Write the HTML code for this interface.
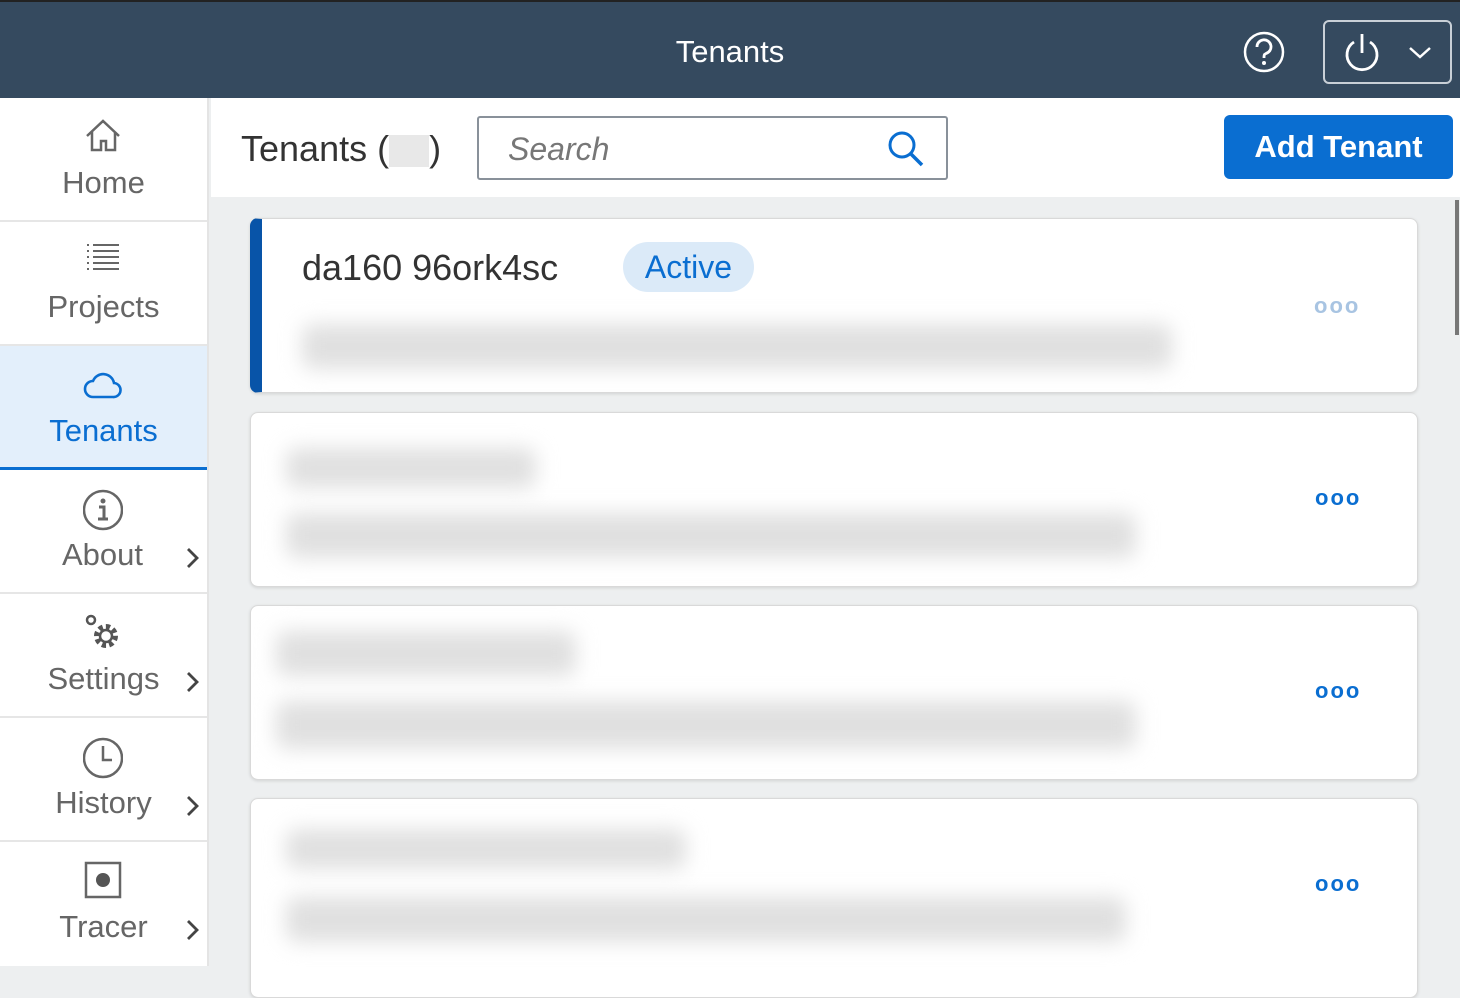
<!DOCTYPE html>
<html><head><meta charset="utf-8"><style>
*{box-sizing:border-box;margin:0;padding:0}
body{width:1460px;height:966px;overflow:hidden;font-family:"Liberation Sans",sans-serif;background:#edeff0;position:relative}
.hdr{position:absolute;left:0;top:0;width:1460px;height:98px;background:#354a5f;border-top:2px solid #222}
.hdr .t{position:absolute;left:0;right:0;top:32px;text-align:center;color:#fff;font-size:31px}
.side{position:absolute;left:0;top:98px;width:209px;height:868px;background:#fff;border-right:2px solid #e4e4e4}
.it{position:absolute;left:0;width:207px;height:124px;border-bottom:2px solid #e6e6e6;color:#666;font-size:31px;text-align:center}
.it svg{position:absolute;left:83px;top:18px}
.it .l{position:absolute;left:0;right:0;top:67px}
.it svg.c{left:185px;top:76px}
.tb{position:absolute;left:211px;top:98px;width:1249px;height:99px;background:#fff}
.card{position:absolute;left:250px;width:1168px;background:#fff;border:1px solid #d9d9d9;border-radius:8px;box-shadow:0 1px 3px rgba(0,0,0,.12)}
.bl{position:absolute;background:#e0e0e0;filter:blur(10px);border-radius:10px}
.dots{position:absolute;left:1064px;font-size:22px;color:#0a6ed1;letter-spacing:2px;font-weight:bold}
</style></head><body>
<div class="hdr"><div class="t">Tenants</div>
<svg style="position:absolute;left:1242px;top:28px" width="44" height="44" viewBox="0 0 44 44"><circle cx="22" cy="22" r="19" fill="none" stroke="#fff" stroke-width="2.5"/><path d="M15 17a7 7 0 1 1 9 6.5c-2 .8-2 2-2 4.5" fill="none" stroke="#fff" stroke-width="2.8"/><circle cx="22" cy="33" r="2" fill="#fff"/></svg>
<div style="position:absolute;left:1323px;top:18px;width:129px;height:64px;border:2px solid #c9d0d7;border-radius:6px"></div>
<svg style="position:absolute;left:1342px;top:29px" width="40" height="44" viewBox="0 0 40 44"><path d="M12 11a15 15 0 1 0 16 0" fill="none" stroke="#fff" stroke-width="2.8"/><path d="M20 3v19" stroke="#fff" stroke-width="2.8"/></svg>
<svg style="position:absolute;left:1407px;top:43px" width="26" height="16" viewBox="0 0 26 16"><path d="M3 3l10 9 10-9" fill="none" stroke="#fff" stroke-width="2.5"/></svg>
</div>
<div class="side">
<div class="it" style="top:0"><svg width="40" height="40" viewBox="0 0 40 40"><path d="M4 20L20 5l16 15M9 16v18h9v-9h5v9h9V16" fill="none" stroke="#666" stroke-width="2.5"/></svg><div class="l">Home</div></div>
<div class="it" style="top:124px"><svg width="40" height="40" viewBox="0 0 40 40"><g stroke="#666" stroke-width="2"><path d="M4 5h2M4 11h2M4 17h2M4 23h2M4 29h2M10 5h26M10 11h26M10 17h26M10 23h26M10 29h26"/></g></svg><div class="l">Projects</div></div>
<div class="it" style="top:248px;background:#e3effb;border-bottom:3px solid #0a6ed1;color:#0a6ed1"><svg width="40" height="40" viewBox="0 0 40 40"><path d="M10 33h20a7 7 0 0 0 1-14 11 11 0 0 0-21-2 8 8 0 0 0 0 16z" fill="none" stroke="#0a6ed1" stroke-width="2.6"/></svg><div class="l">Tenants</div></div>
<div class="it" style="top:372px"><svg width="40" height="44" viewBox="0 0 40 44"><circle cx="20" cy="22" r="19" fill="none" stroke="#666" stroke-width="2.5"/><circle cx="20" cy="13" r="2.5" fill="#666"/><path d="M16 19h5v12M15 31h10" fill="none" stroke="#666" stroke-width="3"/></svg><div class="l" style="left:-2px">About</div><svg class="c" width="16" height="24" viewBox="0 0 16 24"><path d="M3 3l9 9-9 9" fill="none" stroke="#444" stroke-width="2.8"/></svg></div>
<div class="it" style="top:496px"><svg width="44" height="44" viewBox="0 0 44 44"><circle cx="8" cy="8" r="4" fill="none" stroke="#555" stroke-width="2.5"/><circle cx="23" cy="24" r="9" fill="none" stroke="#555" stroke-width="6" stroke-dasharray="4 3"/><circle cx="23" cy="24" r="6" fill="none" stroke="#555" stroke-width="2.5"/></svg><div class="l">Settings</div><svg class="c" width="16" height="24" viewBox="0 0 16 24"><path d="M3 3l9 9-9 9" fill="none" stroke="#444" stroke-width="2.8"/></svg></div>
<div class="it" style="top:620px"><svg width="40" height="44" viewBox="0 0 40 44"><circle cx="20" cy="22" r="19" fill="none" stroke="#666" stroke-width="2.5"/><path d="M20 10v14h9" fill="none" stroke="#666" stroke-width="2.5"/></svg><div class="l">History</div><svg class="c" width="16" height="24" viewBox="0 0 16 24"><path d="M3 3l9 9-9 9" fill="none" stroke="#444" stroke-width="2.8"/></svg></div>
<div class="it" style="top:744px;border-bottom:none"><svg width="40" height="40" viewBox="0 0 40 40"><rect x="3" y="3" width="34" height="34" fill="none" stroke="#666" stroke-width="2.5"/><circle cx="20" cy="20" r="7" fill="#555"/></svg><div class="l">Tracer</div><svg class="c" width="16" height="24" viewBox="0 0 16 24"><path d="M3 3l9 9-9 9" fill="none" stroke="#444" stroke-width="2.8"/></svg></div>
</div>
<div class="tb">
<div style="position:absolute;left:30px;top:30px;font-size:36px;color:#333">Tenants (<span style="display:inline-block;width:40px;height:32px;background:#e8e8e8;vertical-align:middle"></span>)</div>
<div style="position:absolute;left:266px;top:18px;width:471px;height:64px;border:2px solid #89919a;border-radius:3px"><span style="position:absolute;left:29px;top:13px;font-size:32px;font-style:italic;color:#777">Search</span>
<svg style="position:absolute;left:408px;top:12px" width="38" height="38" viewBox="0 0 38 38"><circle cx="15" cy="15" r="12" fill="none" stroke="#0a6ed1" stroke-width="3"/><path d="M24 24l11 11" stroke="#0a6ed1" stroke-width="3.5"/></svg></div>
<div style="position:absolute;left:1013px;top:17px;width:229px;height:64px;background:#0a6ed1;border-radius:6px;color:#fff;font-weight:bold;font-size:31px;text-align:center;line-height:64px">Add Tenant</div>
</div>
<div style="position:absolute;left:1455px;top:200px;width:4px;height:135px;background:#777"></div>
<div class="card" style="top:218px;height:175px;border-left:12px solid #0854a8">
<div style="position:absolute;left:40px;top:28px;font-size:36px;color:#333">da160 96ork4sc</div>
<div style="position:absolute;left:361px;top:23px;width:131px;height:50px;border-radius:25px;background:#dbeaf8;color:#0a6ed1;font-size:32px;text-align:center;line-height:50px">Active</div>
<div class="bl" style="left:40px;top:105px;width:870px;height:45px"></div>
<div class="dots" style="left:1052px;top:74px;color:#a8c4e2">ooo</div>
</div>
<div class="card" style="top:412px;height:175px">
<div class="bl" style="left:35px;top:35px;width:250px;height:40px"></div>
<div class="bl" style="left:35px;top:100px;width:850px;height:45px"></div>
<div class="dots" style="top:72px">ooo</div></div>
<div class="card" style="top:605px;height:175px">
<div class="bl" style="left:25px;top:25px;width:300px;height:45px"></div>
<div class="bl" style="left:25px;top:95px;width:860px;height:48px"></div>
<div class="dots" style="top:72px">ooo</div></div>
<div class="card" style="top:798px;height:200px">
<div class="bl" style="left:35px;top:30px;width:400px;height:40px"></div>
<div class="bl" style="left:35px;top:98px;width:840px;height:45px"></div>
<div class="dots" style="top:72px">ooo</div></div>
</body></html>
